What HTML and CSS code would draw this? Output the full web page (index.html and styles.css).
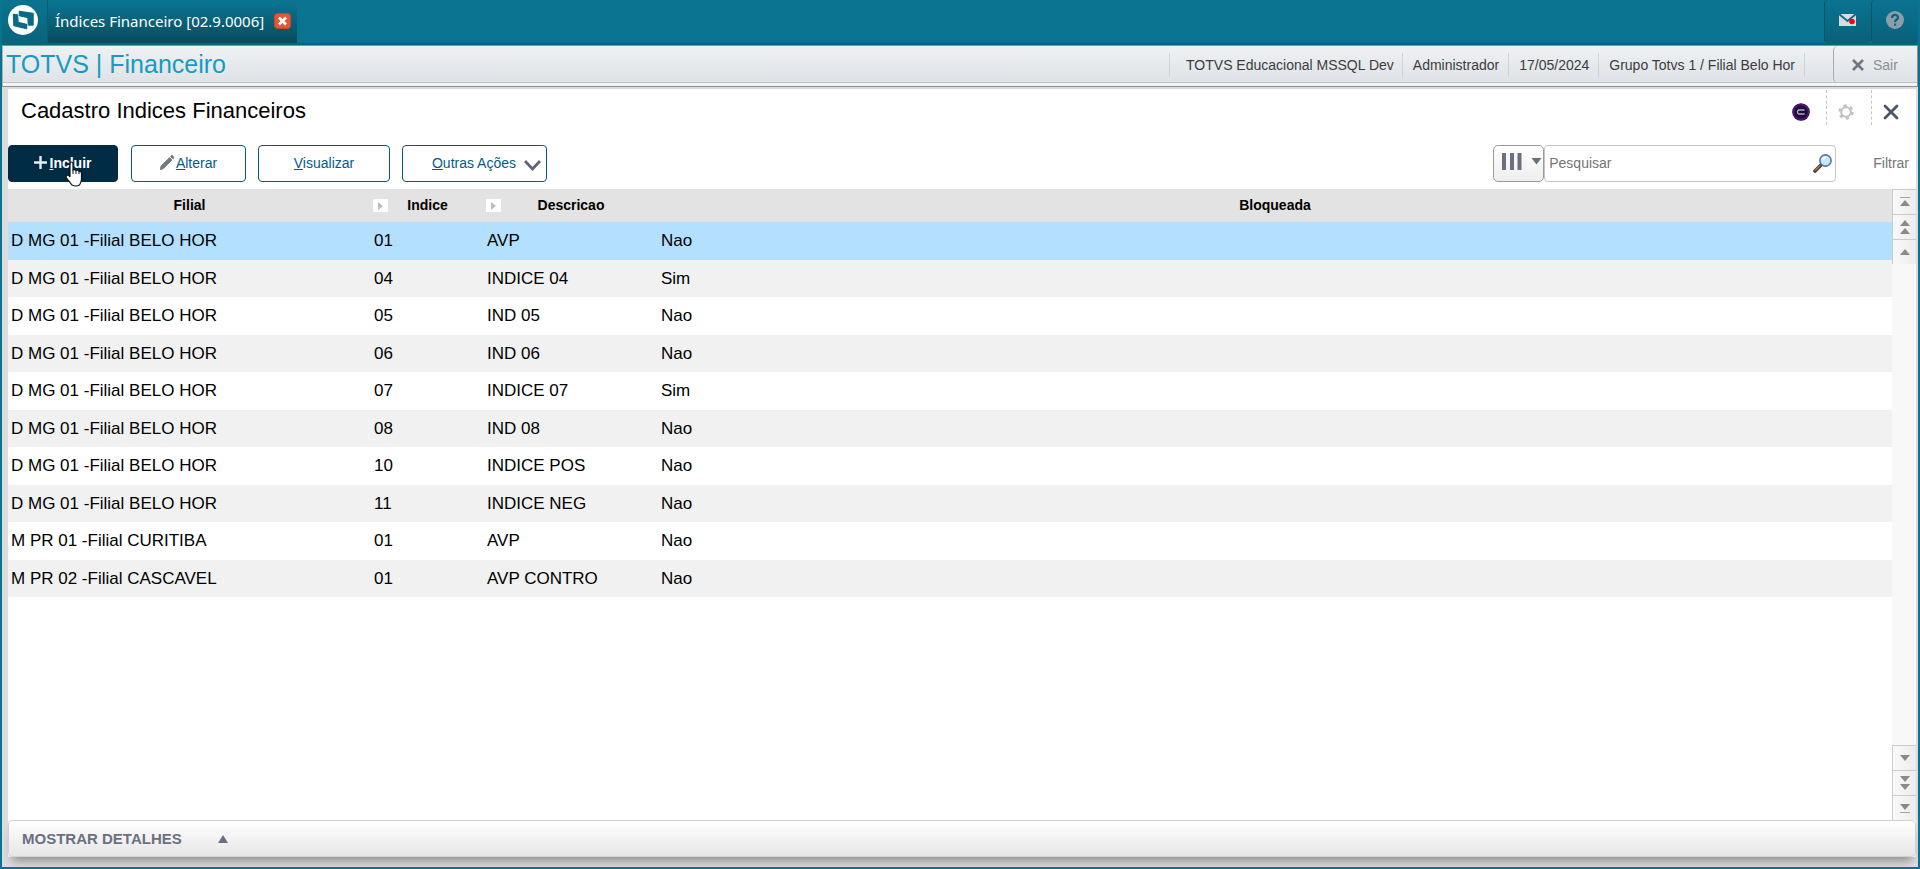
FILE: index.html
```
<!DOCTYPE html>
<html lang="pt-br">
<head>
    <meta charset="utf-8">
    <title>Índices Financeiro</title>
    <link rel="stylesheet" href="styles.css">
</head>
<body>
    <header class="topbar">
        <button class="logo" aria-label="Menu">
            <svg width="30" height="30" viewBox="0 0 30 30">
                <circle cx="15" cy="15" r="15" fill="#fff"/>
                <path d="M11.5 6.5 L25 8.5 L25 20 L20.5 20 L20 12.500 L11.5 10.500 Z" fill="#0a6b85" stroke="#0a6b85" stroke-width="1.5" stroke-linejoin="round"/>
                <path d="M5.500 9.500 L9.500 10 L10 17.500 L18.500 19.500 L18.500 23.500 L6 20.500 Z" fill="#0a6b85" stroke="#0a6b85" stroke-width="1.5" stroke-linejoin="round"/>
            </svg>
        </button>
        <div class="tab">
            <span>Índices Financeiro [02.9.0006]</span>
            <button class="tab-close" aria-label="Fechar aba">
                <svg width="17" height="16" viewBox="0 0 17 16">
                    <rect x="0.5" y="0.5" width="16" height="15" rx="3" fill="#e2573a" stroke="#c8452c"/>
                    <path d="M5 4.5 L12 11.5 M12 4.5 L5 11.5" stroke="#fff" stroke-width="2.6"/>
                </svg>
            </button>
        </div>
        <div class="top-actions">
            <button class="top-btn" aria-label="Mensagens">
                <svg width="18" height="14" viewBox="0 0 18 14">
                    <rect x="0" y="1" width="17" height="12" fill="#d5dde3"/>
                    <path d="M0 1 L8.5 8 L17 1" fill="none" stroke="#0a6b85" stroke-width="1.8"/>
                    <circle cx="13" cy="8.5" r="2.8" fill="#f00"/>
                </svg>
            </button>
            <button class="top-btn" aria-label="Ajuda">
                <svg width="18" height="18" viewBox="0 0 18 18">
                    <circle cx="9" cy="9" r="9" fill="#8a9fa9"/>
                    <path d="M6 7 C6 3 12 3 12 6.5 C12 9 9 8.5 9 11" fill="none" stroke="#0a637c" stroke-width="2.2"/>
                    <rect x="8" y="12.5" width="2.2" height="2.2" fill="#0a637c"/>
                </svg>
            </button>
        </div>
    </header>

    <div class="module-bar">
        <div class="module-name">TOTVS | Financeiro</div>
        <ul class="module-info">
            <li class="env">TOTVS Educacional MSSQL Dev</li>
            <li>Administrador</li>
            <li>17/05/2024</li>
            <li>Grupo Totvs 1 / Filial Belo Hor</li>
            <li class="empty"></li>
        </ul>
        <button class="exit">
            <svg width="12" height="12" viewBox="0 0 12 12"><path d="M1 1 L11 11 M11 1 L1 11" stroke="#6f7480" stroke-width="2.6"/></svg>
            Sair
        </button>
    </div>

    <main class="content">
        <div class="page-head">
            <h1>Cadastro Indices Financeiros</h1>
            <div class="page-icons">
                <button class="icon-btn" aria-label="Assistente">
                    <svg width="18" height="18" viewBox="0 0 18 18">
                        <circle cx="9" cy="9" r="8.8" fill="#1d0d3c"/>
                        <circle cx="9" cy="9" r="7.5" fill="none" stroke="#5c1478" stroke-width="1.5"/>
                        <path d="M12.5 7 L7 7 C5 7 5 11 7 11 L12.5 11" fill="none" stroke="#b9a9cc" stroke-width="1.3"/>
                    </svg>
                </button>
                <button class="icon-btn" aria-label="Configurações">
                    <svg width="16" height="16" viewBox="0 0 16 16">
                        <circle cx="8" cy="8" r="4.8" fill="none" stroke="#c2c2c2" stroke-width="2"/>
                        <circle cx="8" cy="8" r="6.4" fill="none" stroke="#c2c2c2" stroke-width="2.6" stroke-dasharray="3.2 3.5"/>
                    </svg>
                </button>
                <button class="icon-btn" aria-label="Fechar">
                    <svg width="16" height="16" viewBox="0 0 16 16"><path d="M2 2 L14 14 M14 2 L2 14" stroke="#4b5468" stroke-width="2.8" stroke-linecap="round"/></svg>
                </button>
            </div>
        </div>

        <div class="toolbar">
            <button class="btn btn-primary">
                <svg width="13" height="13" viewBox="0 0 13 13"><path d="M6.5 0 V13 M0 6.5 H13" stroke="#e8ecef" stroke-width="2.4"/></svg>
                <span><u>I</u>ncluir</span>
                <svg class="pointer" width="18" height="26" viewBox="0 0 18 26">
                    <path d="M5 16 V3 Q5 1 6.5 1 Q8 1 8 3 V9 Q10 8 11 9.5 Q13 8.5 14 10.5 Q16.5 10 16.5 12.5 V18 Q16.5 21 14.5 24 Q11 26 7 24 L1.5 17 Q0.5 14.5 2.5 14 Q4 14 5 16 Z" fill="#fff" stroke="#111" stroke-width="1.2"/>
                    <path d="M8 9 V13 M11 10 V13 M14 11 V13" stroke="#111" stroke-width="1"/>
                </svg>
            </button>
            <button class="btn btn-edit">
                <svg width="14" height="15" viewBox="0 0 14 15"><path d="M0 15 L1 11 L9.5 2.5 L12 5 L3.5 13.5 Z M10.5 1.5 L12 0 L14 2.5 L13 4 Z" fill="#737982" stroke="#737982" stroke-width="0.8"/></svg>
                <span><u>A</u>lterar</span>
            </button>
            <button class="btn btn-view"><span><u>V</u>isualizar</span></button>
            <button class="btn btn-more">
                <span><u>O</u>utras Ações</span>
                <svg class="chevron" width="17" height="11" viewBox="0 0 17 11"><path d="M1 1 L8.5 9 L16 1" fill="none" stroke="#5f6673" stroke-width="2.8"/></svg>
            </button>

            <div class="search">
                <button class="search-cols" aria-label="Colunas">
                    <svg width="40" height="17" viewBox="0 0 40 17">
                        <path d="M2 0 V17 M10 0 V17 M17.500 0 V17" stroke="#6b7080" stroke-width="4"/>
                        <path d="M29.500 5 H39.500 L34.500 11.500 Z" fill="#6b7080"/>
                    </svg>
                </button>
                <div class="search-box">
                    <input type="text" placeholder="Pesquisar" aria-label="Pesquisar">
                    <button class="search-go" aria-label="Buscar">
                        <svg width="19" height="19" viewBox="0 0 19 19">
                            <path d="M2 17 L8 11" stroke="#4a3a34" stroke-width="3.6" stroke-linecap="round"/>
                            <path d="M2 16.5 L7 11.5" stroke="#b8744c" stroke-width="1.4"/>
                            <circle cx="12.5" cy="6.5" r="5.6" fill="#c5e8fa" stroke="#5477a8" stroke-width="1.6"/>
                            <path d="M9.5 6 Q10 3.5 13 3.5" stroke="#fff" stroke-width="1.8" fill="none"/>
                        </svg>
                    </button>
                </div>
                <a class="filter" href="#">Filtrar</a>
            </div>
        </div>

        <div class="grid">
            <div class="grid-table">
                <table>
                    <colgroup>
                        <col class="c-filial">
                        <col class="c-indice">
                        <col class="c-desc">
                        <col>
                    </colgroup>
                    <thead>
                        <tr>
                            <th>Filial</th>
                            <th><i class="sort"></i>Indice</th>
                            <th><i class="sort"></i>Descricao</th>
                            <th>Bloqueada</th>
                        </tr>
                    </thead>
                    <tbody>
                        <tr class="selected"><td>D MG 01 -Filial BELO HOR</td><td>01</td><td>AVP</td><td>Nao</td></tr>
                        <tr><td>D MG 01 -Filial BELO HOR</td><td>04</td><td>INDICE 04</td><td>Sim</td></tr>
                        <tr><td>D MG 01 -Filial BELO HOR</td><td>05</td><td>IND 05</td><td>Nao</td></tr>
                        <tr><td>D MG 01 -Filial BELO HOR</td><td>06</td><td>IND 06</td><td>Nao</td></tr>
                        <tr><td>D MG 01 -Filial BELO HOR</td><td>07</td><td>INDICE 07</td><td>Sim</td></tr>
                        <tr><td>D MG 01 -Filial BELO HOR</td><td>08</td><td>IND 08</td><td>Nao</td></tr>
                        <tr><td>D MG 01 -Filial BELO HOR</td><td>10</td><td>INDICE POS</td><td>Nao</td></tr>
                        <tr><td>D MG 01 -Filial BELO HOR</td><td>11</td><td>INDICE NEG</td><td>Nao</td></tr>
                        <tr><td>M PR 01 -Filial CURITIBA</td><td>01</td><td>AVP</td><td>Nao</td></tr>
                        <tr><td>M PR 02 -Filial CASCAVEL</td><td>01</td><td>AVP CONTRO</td><td>Nao</td></tr>
                    </tbody>
                </table>
            </div>
            <div class="scroller">
                <div class="scroll-group">
                    <button aria-label="Primeiro"><svg width="10" height="10" viewBox="0 0 10 10"><path d="M0 0.5 H10" stroke="#a5a5a5"/><path d="M5 3 L10 9 H0 Z" fill="#8a8a8a"/></svg></button>
                    <button aria-label="Página acima"><svg width="10" height="14" viewBox="0 0 10 14"><path d="M5 0 L10 6 H0 Z M5 8 L10 14 H0 Z" fill="#8a8a8a"/></svg></button>
                    <button aria-label="Acima"><svg width="10" height="6" viewBox="0 0 10 6"><path d="M5 0 L10 6 H0 Z" fill="#8a8a8a"/></svg></button>
                </div>
                <div class="scroll-group">
                    <button aria-label="Abaixo"><svg width="10" height="6" viewBox="0 0 10 6"><path d="M5 6 L10 0 H0 Z" fill="#8a8a8a"/></svg></button>
                    <button aria-label="Página abaixo"><svg width="10" height="14" viewBox="0 0 10 14"><path d="M5 6 L10 0 H0 Z M5 14 L10 8 H0 Z" fill="#8a8a8a"/></svg></button>
                    <button aria-label="Último"><svg width="10" height="10" viewBox="0 0 10 10"><path d="M5 7 L10 1 H0 Z" fill="#8a8a8a"/><path d="M0 9.5 H10" stroke="#a5a5a5"/></svg></button>
                </div>
            </div>
        </div>

        <button class="details">
            MOSTRAR DETALHES
            <svg width="10" height="8" viewBox="0 0 10 8"><path d="M5 0 L10 8 H0 Z" fill="#6b7080"/></svg>
        </button>
    </main>
</body>
</html>
```
FILE: styles.css
```
* {
    box-sizing: border-box;
}
body {
    margin: 0;
    height: 100vh;
    display: flex;
    flex-direction: column;
    border: solid #0a7390;
    border-width: 0 2px 2px;
    background-color: #dcdcdc;
    font-family: "Liberation Sans", Arial, sans-serif;
    font-size: 14px;
    color: #000;
}
button {
    font: inherit;
    padding: 0;
    border: none;
    background: none;
    cursor: pointer;
}
svg {
    display: block;
    flex: none;
}

/* top bar */
.topbar {
    display: flex;
    height: 45px;
    margin: 0 -2px;
    background-color: #0a7390;
    border-bottom: 2px solid #08647c;
}
.logo {
    width: 48px;
    padding: 5px 0 8px 8px;
    border-right: 1px solid #0a5f76;
    background: linear-gradient(#0a7390, #09647c);
}
.tab {
    display: flex;
    align-items: center;
    gap: 10px;
    margin-top: 3px;
    padding: 0 6px 4px 7px;
    background: linear-gradient(#0a7390, #084b5c);
    color: #fff;
    font-family: "Noto Sans", Tahoma, sans-serif;
    font-size: 15px;
}
.top-actions {
    display: flex;
    margin-left: auto;
    padding-right: 2px;
}
.top-btn {
    display: flex;
    justify-content: center;
    align-items: center;
    width: 47px;
    padding-bottom: 3px;
    border-left: 1px solid #0a5368;
    border-radius: 4px;
    background: linear-gradient(#0a7390, #09617a);
}

/* module bar */
.module-bar {
    display: flex;
    height: 42px;
    border: 1px solid #8e8e8e;
    border-left-color: #b0b0b0;
    background: linear-gradient(#eff1f3, #dfe3e7 36px, #bfc3c6 36px, #bfc3c6 37px, #f2f4f5 37px);
}
.module-name {
    padding: 4px 0 0 3px;
    font-size: 25px;
    line-height: 28px;
    color: #149cc2;
}
.module-info {
    display: flex;
    margin: 7px 28px 0 auto;
    padding: 0;
    height: 24px;
    list-style: none;
    line-height: 24px;
    color: #3c3c3c;
}
.module-info li {
    padding: 0 9px 0 10px;
    border-left: 1px solid #d0d4d7;
}
.module-info .env {
    padding: 0 8px 0 16px;
}
.module-info .empty {
    padding: 0;
}
.exit {
    display: flex;
    align-items: center;
    gap: 9px;
    width: 84px;
    height: 37px;
    padding-left: 18px;
    border-left: 1px solid #a9adb0;
    border-radius: 5px;
    color: #8c8f94;
}

/* content */
.content {
    flex: 1;
    display: flex;
    flex-direction: column;
    min-height: 0;
    margin: 2px 2px 10px 6px;
    background-color: #fff;
}
.page-head {
    display: flex;
    justify-content: space-between;
    height: 56px;
}
h1 {
    margin: 0;
    padding: 8px 0 0 13px;
    font-size: 22px;
    font-weight: normal;
    line-height: 28px;
}
.page-icons {
    display: flex;
    height: 35px;
    margin-top: 1px;
}
.icon-btn {
    display: flex;
    justify-content: center;
    align-items: center;
    width: 45px;
    padding: 8px 6px 0 0;
    border-left: 1px dashed #c4c4c4;
}
.icon-btn:first-child {
    border-left: none;
}
.toolbar {
    display: flex;
    height: 44px;
}
.btn {
    display: flex;
    justify-content: center;
    align-items: center;
    gap: 2px;
    height: 37px;
    padding-bottom: 2px;
    border: 1px solid #045b8b;
    border-radius: 4px;
    background-color: #fff;
    color: #045b8b;
}
.btn-primary {
    position: relative;
    width: 110px;
    margin-right: 13px;
    border-color: #002b45;
    background-color: #002b45;
    color: #fff;
    font-weight: bold;
}
.pointer {
    position: absolute;
    left: 56px;
    top: 15px;
}
.btn-edit {
    width: 115px;
    margin-right: 12px;
}
.btn-view {
    width: 132px;
    margin-right: 12px;
}
.btn-more {
    width: 145px;
    gap: 8px;
    padding-left: 24px;
}
.chevron {
    margin-top: 6px;
}
.search {
    display: flex;
    margin-left: auto;
    height: 37px;
}
.search-cols {
    width: 51px;
    padding: 0 0 4px 8px;
    border: 1px solid #9b9b9b;
    border-radius: 5px;
    background: linear-gradient(#fff, #eee);
}
.search-box {
    display: flex;
    width: 292px;
    border: 1px solid #c6c6c6;
    border-radius: 4px;
}
.search-box input {
    flex: 1;
    min-width: 0;
    padding: 0 0 2px 4px;
    border: none;
    background: none;
    font: inherit;
    outline: none;
}
.search-box input::placeholder {
    color: #757575;
}
.search-go {
    width: 22px;
}
.filter {
    margin-left: 37px;
    padding-right: 7px;
    line-height: 36px;
    color: #757575;
    text-decoration: none;
}

/* grid */
.grid {
    flex: 1;
    display: flex;
    min-height: 0;
}
.grid-table {
    flex: 1;
}
table {
    width: 100%;
    border-collapse: collapse;
    table-layout: fixed;
}
.c-filial {
    width: 363px;
}
.c-indice {
    width: 113px;
}
.c-desc {
    width: 174px;
}
th {
    height: 33px;
    padding: 0 0 2px;
    background-color: #e3e3e3;
    font-size: 14px;
}
.sort {
    float: left;
    width: 15px;
    height: 13px;
    margin: 2px -17px 0 2px;
    background-color: #fff;
}
.sort::before {
    content: "";
    display: block;
    width: 0;
    margin: 3px 0 0 5px;
    border: solid transparent;
    border-width: 4px 0 4px 5px;
    border-left-color: #bdbdbd;
}
td {
    height: 38px;
    padding: 0 3px;
    font-size: 17px;
}
tr:nth-child(even) td {
    height: 37px;
    background-color: #f1f1f1;
}
.selected td {
    background-color: #b3e0ff;
}
.scroller {
    display: flex;
    flex-direction: column;
    justify-content: space-between;
    width: 24px;
    background-color: #f8f8f8;
}
.scroll-group button {
    display: flex;
    justify-content: center;
    align-items: center;
    width: 100%;
    height: 25px;
    border: solid #cbcbcb;
    border-width: 1px 0 0 1px;
    background: linear-gradient(to right, #f9f9f9, #ececec);
}

.details {
    display: flex;
    align-items: center;
    gap: 36px;
    height: 37px;
    padding-left: 13px;
    border: 1px solid #d3d3d3;
    border-radius: 4px;
    background: linear-gradient(#fff, #e6e6e6);
    box-shadow: 0 8px 10px -4px #8f8f8f;
    color: #6b7080;
    font-size: 15px;
    font-weight: bold;
}
```
